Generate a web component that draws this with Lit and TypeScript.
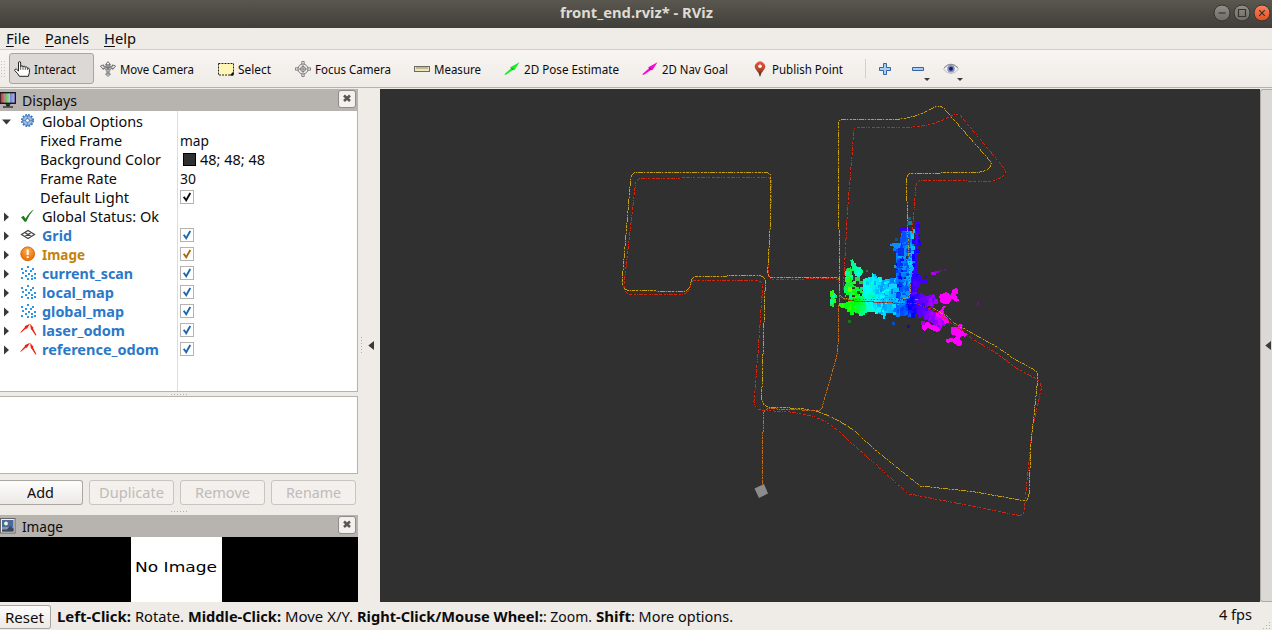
import { LitElement, html, svg, css } from "lit";
import { customElement, property } from "lit/decorators.js";

/* One line of text, condensed or widened to take exactly `w` pixels. */
@customElement("fit-text")
class FitText extends LitElement {
  @property({ type: Number }) w = 0;
  static styles = css`
    :host { display: inline-block; flex: none; white-space: pre; }
    .t { display: inline-block; transform-origin: 0 50%; }
  `;
  render() {
    return html`<span class="t"><slot></slot></span>`;
  }
  firstUpdated() {
    const t = this.renderRoot.querySelector(".t") as HTMLElement;
    const natural = t.getBoundingClientRect().width;
    this.style.width = this.w + "px";
    if (natural > 0) t.style.transform = `scaleX(${this.w / natural})`;
  }
}

const icons: Record<string, any> = {
  hand: svg`<path d="M4.500 10V2Q4.500.6 5.600.6T6.700 2V5.700Q6.900 4.700 7.900 4.700T9 5.900Q9.200 5.200 10.200 5.200T11.300 6.400Q11.500 5.800 12.400 5.900T13.400 7.200Q15.400 6.600 15.400 8.500V11.500L14.400 15.300H5.400L3.800 12.800.7 9.500Q.6 7.800 2.300 8.100Z" fill="#fff" stroke="#222" stroke-width="1"/><path d="M6.700 5.700V8.800M9 5.900V8.800M11.300 6.400V8.800M13.400 7.200V9" stroke="#333" fill="none" stroke-width=".8"/>`,
  move: svg`<g fill="#eee" stroke="#666" stroke-width=".9"><path d="M8 .6 10.400 3.500H9V5L12.500 5.300V3.900L15.600 5 12.800 8.500V7L10 8.200Q9.800 10 9 10.800V13H10.400L8 15.500 5.600 13H7V10.800Q6 10 6 8.200L3.200 7V8.500L.4 5 3.500 3.900V5.300L7 5V3.500H5.600Z"/><path d="M4 6.200H12M8 3V14M5.700 5.200Q8 9.200 10.300 5.200M6 8H10" fill="none"/></g>`,
  select: svg`<rect x=".5" y="2.500" width="15" height="11.500" fill="#fff6b5" stroke="#222" stroke-dasharray="2 1"/><path d="M15.500 10.500V14.500H11.500Z" fill="#111"/>`,
  focus: svg`<g fill="none" stroke="#777"><circle cx="8" cy="8" r="5"/><circle cx="8" cy="8" r="2.500"/><path d="M6.800 3.300V.5H9.200V3.300M6.800 12.700V15.500H9.200V12.700M3.300 6.800H.5V9.200H3.300M12.700 6.800H15.500V9.200H12.700M8 4V12M4 8H12" stroke-width=".9"/></g>`,
  measure: svg`<rect x=".5" y="5.500" width="15" height="5" fill="#efe5b5" stroke="#6d6a60"/><path d="M3 6V8M5 6V8M7 6V8M9 6V8M11 6V8M13 6V8" stroke="#777" stroke-width=".8"/>`,
  pose: svg`<path d="M.3 13.200 7 7.300 6.300 6.300 15.500 1.200 10.300 9.200 9.300 8.800 1.500 14Z" fill="#13f02b"/><path d="M7.300 6.800 9.300 8.800" stroke="#087514"/>`,
  nav: svg`<path d="M.3 13.200 7 7.300 6.300 6.300 15.500 1.200 10.300 9.200 9.300 8.800 1.500 14Z" fill="#ff00d8"/><path d="M7.300 6.800 9.300 8.800" stroke="#80006c"/>`,
  pin: svg`<defs><linearGradient id="pin" x2="0" y2="1"><stop offset="0" stop-color="#e8563c"/><stop offset=".5" stop-color="#b8452c"/><stop offset="1" stop-color="#3a2018"/></linearGradient></defs><path d="M8 16Q7.500 12.300 4 8.800A5.100 5.100 0 1 1 12 8.800Q8.500 12.300 8 16Z" fill="url(#pin)"/><circle cx="8" cy="5.200" r="1.800" fill="#fff"/>`,
  plus: svg`<path d="M6.500 2.500H9.500V6.500H13.500V9.500H9.500V13.500H6.500V9.500H2.500V6.500H6.500Z" fill="#a9cdf0" stroke="#3465a4"/>`,
  minus: svg`<path d="M2.500 6.500H13.500V9.500H2.500Z" fill="#a9cdf0" stroke="#3465a4"/>`,
  eye: svg`<path d="M.5 8Q4 3.200 8 3.200T15.500 8Q12 12.500 8 12.500T.5 8Z" fill="#f4f4f2" stroke="#aaa" stroke-width=".8"/><circle cx="8" cy="7.800" r="3.800" fill="#7c90cf"/><circle cx="8" cy="7.800" r="2" fill="#1c2350"/><path d="M1 6.700Q8-.2 15 6.700" fill="none" stroke="#8d8a86"/>`,
  monitor: svg`<defs><linearGradient id="scr" x2="1"><stop offset=".1" stop-color="#a94d56"/><stop offset=".35" stop-color="#cd8f92"/><stop offset=".36" stop-color="#5dbd62"/><stop offset=".65" stop-color="#9fe09f"/><stop offset=".66" stop-color="#7b7bdc"/><stop offset="1" stop-color="#b9b9f4"/></linearGradient></defs><rect x="0" y=".7" width="15.300" height="10.600" fill="url(#scr)" stroke="#111" stroke-width="1.300"/><path d="M5.500 12.300H10.500L9.500 14H6.500Z" fill="#111"/><path d="M3 15H13" stroke="#222" stroke-width="1.300"/>`,
  picture: svg`<rect x=".5" y=".5" width="14.500" height="14.500" fill="#eee" stroke="#666"/><rect x="2" y="2" width="11.500" height="11.500" fill="#4a6a9c"/><path d="M2 9H13.500V13.500H2Z" fill="#8796ad"/><path d="M7 11.500 10 8 13.500 10.500V13.500H2V11.500Z" fill="#39475f"/><circle cx="6" cy="5.500" r="1.900" fill="#f3f3d5"/>`,
  gear: svg`<circle cx="6.500" cy="6.500" r="5.700" fill="none" stroke="#4478b8" stroke-width="1.800" stroke-dasharray="1.800 1.180"/><circle cx="6.500" cy="6.500" r="4.900" fill="#9fc1e8" stroke="#4478b8"/><circle cx="6.500" cy="6.500" r="1.900" fill="#fff" stroke="#4478b8"/><path d="M6.500 2V4.500M6.500 8.500V11M2 6.500H4.500M8.500 6.500H11" stroke="#4478b8" stroke-width=".7"/>`,
  ok: svg`<path d="M0 8.300 2.700 6.700 4.500 9.800Q8 3.500 13 .3 8.500 5 5.200 12.800H3.700Z" fill="#217821"/>`,
  grid: svg`<path d="M.5 6.500 7 2.500 13.500 6.500 7 10.500ZM3.800 4.500 10.300 8.500M3.800 8.500 10.300 4.500" fill="none" stroke="#444" stroke-width="1.200"/>`,
  warn: svg`<defs><radialGradient id="wrn" cy=".3"><stop offset="0" stop-color="#ffb055"/><stop offset="1" stop-color="#f17a0c"/></radialGradient></defs><circle cx="6.700" cy="6.800" r="6.900" fill="url(#wrn)" stroke="#c25b08" stroke-width=".8"/><path d="M6.700 2.600V8M6.700 9.200V11" stroke="#fff" stroke-width="2"/>`,
  cloud: svg`<path d="M0 2h2v2h-2zM6 0h2v2h-2zM11 2h2v2h-2zM4 4h2v2h-2zM9 4h2v2h-2zM1 6h2v2h-2zM4 9h2v2h-2zM7 7h2v2h-2zM13 7h2v2h-2zM10 9h2v2h-2zM0 11h2v2h-2zM6 12h2v2h-2zM10 12h2v2h-2zM13 11h2v2h-2z" fill="#2a96e8" shape-rendering="crispEdges"/>`,
  path: svg`<path d="M-.8 9.500 4 4 3.700 3.300 9 .8 5.800 6 5 5.500 0 9.800ZM9 .8 12.500 4.700 12 5.500 15.500 12.300 14.500 12.500 10.500 6.500 10 6.800Z" fill="#ee2211"/>`,
  check: svg`<rect x=".5" y=".5" width="13" height="13" fill="#fff" stroke="#b6b2ad"/><path d="M3.700 6.800 6.200 10.300 10.300 3" fill="none" stroke="currentColor" stroke-width="1.900"/>`,
};
const icon = (name: string, size = 16) =>
  html`<svg class="ico" width=${size} height=${size} viewBox="0 0 ${size} ${size}">${icons[name]}</svg>`;

const tools: [string, string, number, number][] = [
  ["hand", "Interact", 42, 86], ["move", "Move Camera", 74, 118], ["select", "Select", 33, 77],
  ["focus", "Focus Camera", 76, 119], ["measure", "Measure", 47, 90], ["pose", "2D Pose Estimate", 95, 138],
  ["nav", "2D Nav Goal", 66, 110], ["pin", "Publish Point", 71, 118],
];

interface Row { label: string; w: number; icon?: string; cls?: string; value?: string; vw?: number; check?: boolean; open?: boolean; swatch?: boolean }
const rows: Row[] = [
  { label: "Global Options", w: 101, icon: "gear", open: true },
  { label: "Fixed Frame", w: 82, value: "map", vw: 29 },
  { label: "Background Color", w: 121, value: "48; 48; 48", vw: 65, swatch: true },
  { label: "Frame Rate", w: 77, value: "30", vw: 16 },
  { label: "Default Light", w: 89, check: true },
  { label: "Global Status: Ok", w: 117, icon: "ok" },
  { label: "Grid", w: 30, icon: "grid", cls: "on", check: true },
  { label: "Image", w: 43, icon: "warn", cls: "alert", check: true },
  { label: "current_scan", w: 91, icon: "cloud", cls: "on", check: true },
  { label: "local_map", w: 72, icon: "cloud", cls: "on", check: true },
  { label: "global_map", w: 82, icon: "cloud", cls: "on", check: true },
  { label: "laser_odom", w: 83, icon: "path", cls: "on", check: true },
  { label: "reference_odom", w: 117, icon: "path", cls: "on", check: true },
];

/* ---- Point cloud: regions and speckles, in thirds of a pixel from (800, 200) ---- */
type Region = { pts: string; tone: string; n: number };
const regions: Region[] = [
  { tone: "green", n: 10, pts: "93,272 101,270 104,282 111,284 111,293 104,295 102,321 90,318 92,296" },
  { tone: "green", n: 70, pts: "137,222 139,206 153,202 156,214 154,238 160,254 170,262 186,270 196,292 186,302 140,296 134,290 140,280 132,262 138,250" },
  { tone: "mix", n: 12, pts: "151,180 158,178 164,190 172,202 184,202 187,222 178,230 164,222 156,204" },
  { tone: "mix", n: 170, pts: "188,240 198,234 215,232 216,220 227,222 229,234 242,232 244,240 275,236 330,240 335,300 300,312 196,306 186,286 192,266" },
  { tone: "low", n: 260, pts: "118,308 136,310 150,300 164,290 200,292 240,296 330,292 372,300 372,330 340,345 300,340 258,338 255,358 248,358 248,338 210,335 182,342 160,335 158,346 150,344 148,328 120,322" },
  { tone: "arm", n: 300, pts: "306,94 325,82 340,100 344,160 345,240 350,290 330,298 288,290 288,180 294,150 300,130 304,100" },
  { tone: "indigo", n: 80, pts: "348,64 357,66 355,110 354,180 350,182 352,230 362,226 366,236 384,240 380,250 366,250 352,250 350,280 352,300 330,300 332,240 344,200" },
  { tone: "azure", n: 15, pts: "270,132 288,128 304,130 304,150 320,140 318,168 300,178 290,172 290,152 282,154 282,140 270,138" },
  { tone: "purple", n: 150, pts: "340,284 362,280 384,290 402,280 408,300 400,318 384,322 400,335 416,345 438,352 432,372 420,392 405,376 370,350 340,332 325,330 320,300" },
  { tone: "magenta", n: 0, pts: "420,284 440,276 452,284 458,270 472,262 474,280 468,284 472,296 478,300 470,306 454,296 448,310 438,314 420,306 418,290" },
  { tone: "magenta", n: 0, pts: "438,318 430,330 432,344 440,350 446,362 450,366 436,372 424,354 410,350 406,338 420,332 430,318" },
  { tone: "magenta", n: 0, pts: "366,372 384,366 394,374 410,378 422,390 412,396 394,390 384,384 374,392 368,390" },
  { tone: "magenta", n: 0, pts: "454,382 474,380 480,370 488,374 486,390 502,402 496,410 484,408 478,418 486,424 484,440 470,436 458,426 442,428 436,420 450,414 462,416 468,408 452,402" },
];
type Stops = [number, number][];
const upper: Stops = [[90, 125], [150, 150], [185, 168], [205, 178], [240, 188], [290, 200], [325, 220], [500, 300]];
const lower: Stops = [[90, 118], [170, 122], [190, 150], [215, 178], [250, 188], [290, 206], [325, 228], [350, 244], [500, 270]];
const east: Stops = [[90, 240], [330, 240], [355, 256], [385, 272], [410, 276], [440, 292], [500, 300]];
const hueAt = (x: number, stops: Stops) => {
  for (let i = 1; i < stops.length; i++) {
    const [x0, h0] = stops[i - 1], [x1, h1] = stops[i];
    if (x <= x1) return h0 + ((h1 - h0) * Math.max(0, x - x0)) / (x1 - x0);
  }
  return 300;
};
const inside = (x: number, y: number, p: number[][]) => {
  let hit = false;
  for (let i = 0, j = p.length - 1; i < p.length; j = i++)
    if (p[i][1] > y !== p[j][1] > y && x < ((p[j][0] - p[i][0]) * (y - p[i][1])) / (p[j][1] - p[i][1]) + p[i][0]) hit = !hit;
  return hit;
};
let seed = 71;
const rnd = () => ((seed = (seed * 1103515245 + 12345) % 2147483648) / 2147483648);
const fills: Record<string, string> = { mix: "url(#hueU)", low: "url(#hueL)", purple: "url(#hueE)", green: "#19ee3c", arm: "#057dff", indigo: "#3d00ff", azure: "#0a8cff", magenta: "#ff00ff" };

const speckles = (r: Region) => {
  const p = r.pts.split(" ").map((s) => s.split(",").map(Number));
  const xs = p.map((q) => q[0]), ys = p.map((q) => q[1]);
  const x0 = Math.min(...xs), x1 = Math.max(...xs), y0 = Math.min(...ys), y1 = Math.max(...ys);
  const out = [];
  for (let i = 0; i < r.n; i++) {
    const x = Math.round((x0 + rnd() * (x1 - x0)) / 3) * 3, y = Math.round((y0 + rnd() * (y1 - y0)) / 3) * 3;
    const s = 6 + Math.floor(rnd() * 3) * 3, k = rnd();
    if (!inside(x, y, p)) continue;
    let hue = 0;
    if (r.tone === "mix") hue = hueAt(x, upper) + (k - 0.5) * 34;
    if (r.tone === "low") hue = hueAt(x, lower) + (k - 0.5) * 30;
    if (r.tone === "purple") hue = hueAt(x, east) + (k - 0.5) * 22;
    if (r.tone === "green") hue = 104 + k * 56;
    if (r.tone === "arm") hue = x > 336 ? 236 + k * 14 : x > 324 ? 188 + k * 18 : x < 304 ? 214 + k * 28 : 198 + k * 28;
    if (r.tone === "indigo") hue = 238 + k * 28;
    if (r.tone === "azure") hue = 195 + k * 42;
    out.push(svg`<rect x=${x - 3} y=${y - 3} width=${s} height=${s + (k > 0.6 ? 3 : 0)} fill="hsl(${hue} 100% 50%)"/>`);
  }
  return out;
};

/* Stray returns and gaps around the dense regions: x, y, w, h, colour. */
const strays: [number, number, number, number, string][] = [
  [323, 52, 9, 8, "#0e5f97"], [320, 62, 16, 12, "#12839b"], [298, 82, 32, 12, "#3300ff"], [285, 115, 8, 8, "#124d8c"],
  [394, 215, 14, 9, "#b400ee"], [404, 213, 14, 7, "#9900cc"], [416, 211, 6, 5, "#6b1490"], [431, 208, 7, 6, "#58207c"],
  [531, 306, 7, 8, "#5c1b6b"], [355, 420, 8, 7, "#481a68"], [360, 416, 6, 6, "#481a68"], [276, 367, 8, 8, "#0a50bd"],
  [322, 376, 8, 7, "#2400c8"], [145, 361, 7, 7, "#227024"], [282, 196, 7, 8, "#14a0b8"], [362, 362, 12, 12, "#a400f4"],
  [186, 218, 4, 5, "#177334"], [198, 211, 5, 6, "#187f34"], [318, 168, 6, 9, "#143a5c"],
  [298, 200, 10, 5, "#182a6e"], [312, 230, 6, 6, "#182a6e"], [330, 80, 6, 12, "#303030"], [336, 86, 8, 12, "#00c8e6"],
  [352, 226, 10, 10, "#3c00ff"], [376, 228, 6, 7, "#3500e0"], [420, 297, 14, 8, "#ff00ff"],
  [166, 232, 14, 12, "#1fe04a"], [176, 244, 12, 9, "#14cc55"], [160, 242, 8, 9, "#2cff2c"], [170, 252, 9, 6, "#303030"],
  [156, 262, 9, 6, "#1d4a26"], [172, 272, 9, 9, "#234433"], [156, 284, 9, 6, "#303030"], [180, 280, 6, 9, "#303030"],
  [144, 262, 12, 15, "#6aff00"], [138, 285, 9, 9, "#303030"], [180, 262, 8, 8, "#00e896"], [200, 286, 24, 6, "#00ffb0"],
  [268, 252, 24, 12, "#12d2ff"], [278, 264, 20, 12, "#00c0ff"], [240, 256, 9, 12, "#0aa0ff"], [300, 262, 9, 15, "#0058ff"],
  [384, 318, 9, 4, "#303030"], [372, 352, 9, 6, "#8200ff"], [404, 352, 12, 9, "#c800ff"], [306, 96, 12, 30, "#0a4cff"],
  [294, 144, 18, 24, "#0a2cf0"], [290, 180, 9, 24, "#0d37f2"],
];

@customElement("rviz-view")
class RvizView extends LitElement {
  static styles = css`
    :host { display: block; background: #303030; overflow: hidden; }
    svg { display: block; }
    .trace { fill: none; stroke-width: 3; }
    .y { stroke: #c89e12; stroke-dasharray: 9 3 3 3 15 3 3 6 6 3; }
    .r { stroke: #cc2a12; stroke-dasharray: 9 3 12 3 3 3 6 6; }
    .o { stroke: #c46a10; stroke-dasharray: 6 3 3 3 12 3; }
    .under { fill: none; stroke-width: 3; }
    .under.y { stroke: #59490f; stroke-dasharray: none; }
    .under.r { stroke: #5c150c; stroke-dasharray: none; }
    .under.o { stroke: #5a3010; stroke-dasharray: none; }
  `;
  trace(kind: string, d: string) {
    return svg`<path class="under ${kind}" d=${d}/><path class="trace ${kind}" d=${d}/>`;
  }
  hues(id: string, stops: Stops) {
    return svg`<linearGradient id=${id} gradientUnits="userSpaceOnUse" x1="90" x2="500" y1="0" y2="0">
      ${stops.map(([x, h]) => svg`<stop offset=${(x - 90) / 410} stop-color="hsl(${h} 100% 50%)"/>`)}
    </linearGradient>`;
  }
  render() {
    return html`<svg width="880" height="513" viewBox="380 89 880 513" shape-rendering="crispEdges">
      <defs>${this.hues("hueU", upper)}${this.hues("hueL", lower)}${this.hues("hueE", east)}</defs>
      <g transform="translate(600 90) scale(.33333)">
        ${this.trace("r", "M484 660 488 590Q488 572 470 572L282 571Q275 573 271 590 265 612 245 614L85 612Q72 608 73 575L106 285Q108 267 125 265L500 262Q514 264 516 275L511 400 504 550Q506 568 520 568L705 566Q716 568 718 580")}
        ${this.trace("y", "M497 580Q495 557 478 557L290 559Q275 560 272 580 268 604 250 604L85 602Q65 595 66 575L92 265Q95 247 110 247L495 247Q512 248 513 262L511 400 503 545Q503 562 515 562L708 562Q719 564 719 580")}
      </g>
      <g transform="translate(740 260) scale(.33333)">
        ${this.trace("r", "M0 62 55 62Q68 64 68 80L54 280 42 425Q48 450 68 451L150 456Q220 465 250 482 300 512 330 545L500 697Q505 703 520 704L835 766Q850 768 853 750L875 520 904 385Q903 365 890 357L830 325 770 280 690 232")}
        ${this.trace("y", "M76 62 70 250 65 415Q66 435 85 442L180 445 235 455Q290 475 340 510L400 565 540 678 700 695 858 723Q867 715 868 690L872 560 894 350Q893 335 880 328L820 295 770 260 670 205")}
        ${this.trace("o", "M66 686 70 462Q72 448 85 446L235 452Q245 450 247 440L290 290Q296 250 296 200L298 70")}
      </g>
      <g transform="translate(800 200) scale(.33333)">
        ${regions.map((r) => svg`<polygon points=${r.pts} fill=${fills[r.tone]}/>${speckles(r)}`)}
        ${strays.map(([x, y, w, h, c]) => svg`<rect x=${x} y=${y} width=${w} height=${h} fill=${c}/>`)}
        <g opacity=".8">
          ${this.trace("r", "M120 290Q130 300 160 303L300 310 350 311 400 330 500 402 512 412")}
          ${this.trace("y", "M118 240 120 284Q125 295 140 297L300 298Q325 297 331 280L327 170 322 70M345 297 358 298M400 325 440 348 470 375 492 387")}
        </g>
      </g>
      <g transform="translate(820 90) scale(.33333)">
        ${this.trace("r", "M70 600 82 370 102 120Q102 112 115 112L280 111Q340 107 395 77 410 71 422 78L550 232Q560 245 552 255 540 268 510 274L300 271Q290 275 288 285L280 380 277 430")}
        ${this.trace("y", "M60 590 55 300 55 98Q56 89 67 89L230 88Q290 84 340 53 357 44 370 53L512 215Q516 225 505 238 490 247 455 248L275 250Q260 252 260 268L262 400")}
      </g>
      <polygon points="754.500,488.500 764,484 768,493.500 759,498" fill="#8c8c8c" shape-rendering="auto"/>
    </svg>`;
  }
}

@customElement("app-root")
class AppRoot extends LitElement {
  static styles = css`
    :host { display: flex; flex-direction: column; width: 1272px; height: 630px; overflow: hidden; background: #efebe7; color: #0c0c0c; font: 14.200px/19px "Noto Sans", "Open Sans", sans-serif; }
    * { box-sizing: border-box; }
    svg { flex: none; display: block; }
    .title { height: 28px; flex: none; display: grid; grid-template-columns: 1fr 153px 1fr; align-items: center; background: linear-gradient(#5a574f, #3f3e39); color: #dfdbd2; font-weight: 700; font-size: 13.500px; padding-bottom: 2px; }
    .title fit-text { grid-column: 2; }
    .wins { justify-self: end; display: flex; gap: 2px; padding-right: 1px; }
    .menu { height: 22px; flex: none; display: flex; padding: 1px 0 0 6px; border-bottom: 1px solid #d3cfca; }
    .menu fit-text { margin-right: 15px; }
    u { text-underline-offset: 2px; text-decoration-thickness: 1px; }
    .tools { height: 38px; flex: none; display: flex; align-items: center; font-size: 12.300px; background: linear-gradient(#f8f5f2, #efebe7); border-bottom: 1px solid #b5b1ac; margin-bottom: 1px; }
    .grip { width: 9px; height: 17px; background: radial-gradient(circle, #c6c2bd 0.800px, transparent 1px) 0 0/3px 3px; background-clip: content-box; padding-right: 4px; }
    .tool { display: flex; align-items: center; gap: 4px; height: 31px; padding-left: 5px; flex: none; }
    .tool fit-text { margin-top: 1px; }
    .tool.sel { padding-left: 4px; background: #dcd8d5; border: 1px solid #a9a5a1; border-radius: 3px; margin-right: 1px; }
    .sep { width: 1px; height: 19px; background: #d3cfca; margin-right: 11px; }
    .act { width: 33px; height: 31px; display: flex; align-items: center; position: relative; }
    .act.drop::after { content: ""; position: absolute; left: 14px; bottom: 3px; border: 3.500px solid transparent; border-top-color: #3a3935; border-bottom: 0; }
    .main { flex: none; display: grid; grid-template: 513px / 358px 22px 880px 12px; }
    .dock { display: flex; flex-direction: column; min-height: 0; }
    .head { height: 22px; flex: none; background: #b7b3af; display: flex; align-items: center; padding-right: 2px; }
    .head .ico { margin-right: 6px; }
    .head .close { margin: 0 0 2px auto; }
    .tree { height: 281px; flex: none; background: #fff; border-right: 1px solid #b6b2ad; border-bottom: 1px solid #b6b2ad; display: grid; grid-template-columns: 177px 1fr; }
    .names, .values { padding-top: 1px; }
    .values { border-left: 1px solid #dedbd8; }
    .row { height: 19px; display: flex; align-items: center; }
    .row.child { padding-left: 40px; }
    .arrow { width: 21px; flex: none; padding-left: 4px; }
    .names .ico { margin-right: 6px; overflow: visible; }
    .values .row { padding-left: 2px; }
    .values .ico { margin-bottom: 1px; }
    .on { color: #2b78c8; font-weight: 700; }
    .alert { color: #c4820e; font-weight: 700; }
    .values .on { color: #1f66ac; }
    .values .alert { color: #a8690a; }
    .swatch { width: 13px; height: 13px; background: #303030; border: 1px solid #000; margin: 0 4px 0 3px; }
    .dots { height: 4px; flex: none; display: flex; justify-content: center; align-items: center; }
    .dots i { width: 17px; height: 1px; background: repeating-linear-gradient(90deg, #b3afaa 0 1px, transparent 1px 3px); }
    .help { height: 78px; flex: none; background: #fff; border: 1px solid #b6b2ad; border-left: 0; }
    .btns { display: grid; grid-template-columns: 83px 85px 85px 85px; gap: 6px; height: 31px; padding-top: 6px; flex: none; }
    .btn { height: 25px; display: flex; align-items: center; justify-content: center; border: 1px solid #aaa6a2; border-radius: 3px; background: linear-gradient(#fdfdfc, #ece9e6); }
    .btn.first { border-left: 0; border-radius: 0 3px 3px 0; padding-right: 2px; }
    .btn.off { color: #bfbbb7; border-color: #c8c4c0; background: #f3f0ed; }
    .dots.low { height: 10px; padding-top: 3px; }
    .image { height: 65px; flex: none; background: #000; display: flex; padding-left: 131px; }
    .collapse { display: flex; align-items: center; justify-content: space-between; padding: 0 6px 0 3px; }
    .vdots { width: 1px; height: 17px; background: repeating-linear-gradient(#b3afaa 0 1px, transparent 1px 3px); }
    .side { background: #dcd8d5; border: 1px solid #aeaaa6; border-right: 0; border-radius: 3px 0 0 3px; display: flex; align-items: center; justify-content: flex-end; padding-right: 1px; }
    .status { height: 28px; flex: none; display: flex; align-items: center; }
    .status .btn { width: 51px; height: 24px; margin: 2px 6px 0 0; padding-right: 2px; }
    .seg { margin-right: 4px; }
    .tight { margin-right: 0; }
    .status fit-text { margin-top: 1px; }
    .status .fps { margin: -4px 4px 0 auto; }
    .resize { align-self: flex-end; }
  `;

  close() {
    return html`<svg class="close" width="18" height="18" viewBox="0 0 18 18"><rect x=".5" y=".5" width="17" height="17" rx="2.500" fill="#f3f1ef" stroke="#8f8b87"/><path d="M6 5.500 12 11M12 5.500 6 11" stroke="#5a5753" stroke-width="2.600"/></svg>`;
  }
  winButtons() {
    const glyphs = ["M5.500 9H12.500", "M5.500 5.500H12.500V12.500H5.500Z", "M6.200 6.200 11.800 11.800M11.800 6.200 6.200 11.800"];
    return html`<div class="wins">${glyphs.map((d, i) => html`<svg width="18" height="18" viewBox="0 0 18 18">
      <defs><linearGradient id="win${i}" x2="0" y2="1"><stop offset="0" stop-color=${i === 2 ? "#f8835f" : "#918f88"}/><stop offset="1" stop-color=${i === 2 ? "#e2501f" : "#6d6b65"}/></linearGradient></defs>
      <circle cx="9" cy="9" r="8" fill="url(#win${i})" stroke="#35342f"/><path d=${d} fill="none" stroke="#35342f" stroke-width="1.200"/></svg>`)}</div>`;
  }
  leftArrow() {
    return html`<svg width="6" height="9" viewBox="0 0 6 9"><path d="M6 0V9L.3 4.500Z" fill="#3a3935"/></svg>`;
  }
  render() {
    return html`
      <div class="title"><fit-text .w=${153}>front_end.rviz* - RViz</fit-text>${this.winButtons()}</div>
      <div class="menu"><fit-text .w=${24}><u>F</u>ile</fit-text><fit-text .w=${44}><u>P</u>anels</fit-text><fit-text .w=${32}><u>H</u>elp</fit-text></div>
      <div class="tools"><span class="grip"></span>
        ${tools.map(([ic, label, w, bw], i) => html`<div class="tool ${i === 0 ? "sel" : ""}" style="width:${i === 0 ? bw - 1 : bw}px">${icon(ic)}<fit-text .w=${w}>${label}</fit-text></div>`)}
        <span class="sep"></span>
        <div class="act">${icon("plus")}</div><div class="act drop">${icon("minus")}</div><div class="act drop">${icon("eye")}</div>
      </div>
      <div class="main">
        <div class="dock">
          <div class="head">${icon("monitor")}<fit-text .w=${55}>Displays</fit-text>${this.close()}</div>
          <div class="tree">
            <div class="names">${rows.map((r) => html`<div class="row ${r.icon ? "" : "child"} ${r.cls ?? ""}">
              ${r.icon ? html`<span class="arrow"><svg width="9" height="10" viewBox="0 0 9 10" style="margin-left:${r.open ? -2 : 0}px"><path d=${r.open ? "M0 2.500H9L4.500 7.500Z" : "M0 .5V9.500L5 5Z"} fill="#3a3935"/></svg></span>${icon(r.icon, 15)}` : ""}
              <fit-text .w=${r.w}>${r.label}</fit-text></div>`)}</div>
            <div class="values">${rows.map((r) => html`<div class="row ${r.cls ?? ""}">
              ${r.swatch ? html`<span class="swatch"></span>` : ""}${r.value ? html`<fit-text .w=${r.vw}>${r.value}</fit-text>` : ""}${r.check ? icon("check", 14) : ""}</div>`)}</div>
          </div>
          <div class="dots"><i></i></div>
          <div class="help"></div>
          <div class="btns">
            <div class="btn first"><fit-text .w=${27}>Add</fit-text></div>
            <div class="btn off"><fit-text .w=${65}>Duplicate</fit-text></div>
            <div class="btn off"><fit-text .w=${55}>Remove</fit-text></div>
            <div class="btn off"><fit-text .w=${55}>Rename</fit-text></div>
          </div>
          <div class="dots low"><i></i></div>
          <div class="head">${icon("picture")}<fit-text .w=${41}>Image</fit-text>${this.close()}</div>
          <div class="image"><svg width="91" height="65" viewBox="0 0 91 65"><rect width="91" height="65" fill="#fff"/><text x="4" y="35" font-family="DejaVu Sans" font-size="13.300" textLength="82" lengthAdjust="spacingAndGlyphs">No Image</text></svg></div>
        </div>
        <div class="collapse"><span class="vdots"></span>${this.leftArrow()}</div>
        <rviz-view></rviz-view>
        <div class="side">${this.leftArrow()}</div>
      </div>
      <div class="status">
        <div class="btn first"><fit-text .w=${39}>Reset</fit-text></div>
        <fit-text class="seg" .w=${74}><b>Left-Click:</b></fit-text><fit-text class="seg" .w=${49}>Rotate.</fit-text>
        <fit-text class="seg" .w=${93}><b>Middle-Click:</b></fit-text><fit-text class="seg" .w=${68}>Move X/Y.</fit-text>
        <fit-text class="tight" .w=${186}><b>Right-Click/Mouse Wheel:</b></fit-text><fit-text class="seg" .w=${49}>: Zoom.</fit-text>
        <fit-text class="tight" .w=${35}><b>Shift</b></fit-text><fit-text .w=${102}>: More options.</fit-text>
        <fit-text class="fps" .w=${33}>4 fps</fit-text>
        <svg class="resize" width="16" height="9" viewBox="0 0 16 9"><path d="M13 1h1v1h-1zM10 4h1v1h-1zM13 4h1v1h-1zM7 7h1v1h-1zM10 7h1v1h-1zM13 7h1v1h-1z" fill="#b3afaa"/></svg>
      </div>`;
  }
}
